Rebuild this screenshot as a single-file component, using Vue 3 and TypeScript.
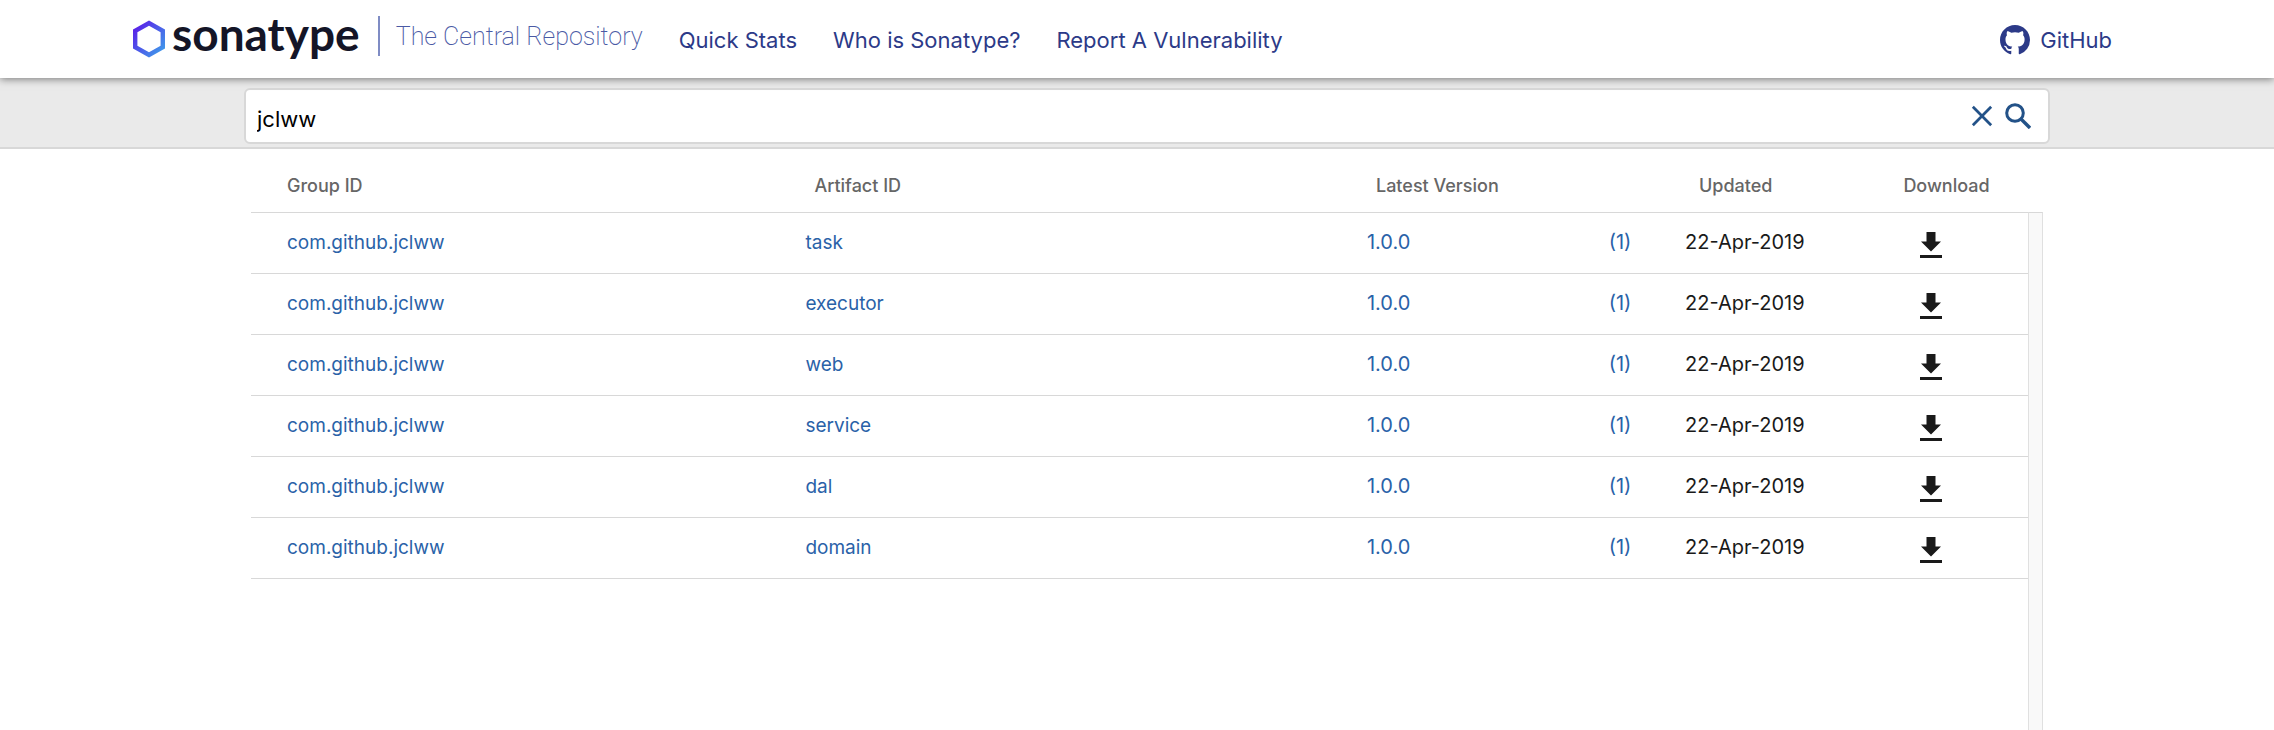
<script setup lang="ts">
import { ref } from 'vue'

interface Artifact {
  group: string
  name: string
  version: string
  count: number
  updated: string
}

const query = ref<string>('jclww')

const artifacts: Artifact[] = ['task', 'executor', 'web', 'service', 'dal', 'domain'].map((name) => ({
  group: 'com.github.jclww',
  name,
  version: '1.0.0',
  count: 1,
  updated: '22-Apr-2019',
}))

const links: string[] = ['Quick Stats', 'Who is Sonatype?', 'Report A Vulnerability']
</script>

<template>
  <div class="page">
    <header class="topbar">
      <a class="brand" href="#">
        <svg class="hexagon" viewBox="0 0 34 38" aria-hidden="true">
          <defs>
            <linearGradient id="hex" x1="0" y1="0" x2="1" y2="1">
              <stop offset="0.1" stop-color="#5a1ee8" />
              <stop offset="0.9" stop-color="#3f9aea" />
            </linearGradient>
          </defs>
          <path
            fill="url(#hex)"
            fill-rule="evenodd"
            d="M17 0.5 33 9.5V28.5L17 37.5 1 28.5V9.5ZM17 5.7 5.4 12.2V25.8L17 32.3 28.6 25.8V12.2Z"
          />
        </svg>
        <span class="wordmark">sonatype</span>
        <span class="tagline">The Central Repository</span>
      </a>
      <nav class="nav">
        <a v-for="link in links" :key="link" href="#">{{ link }}</a>
      </nav>
      <a class="github" href="#">
        <svg viewBox="0 0 16 16" aria-hidden="true">
          <path
            fill="currentColor"
            d="M8 0C3.58 0 0 3.58 0 8c0 3.54 2.29 6.53 5.47 7.59.4.07.55-.17.55-.38 0-.19-.01-.82-.01-1.49-2.01.37-2.53-.49-2.69-.94-.09-.23-.48-.94-.82-1.13-.28-.15-.68-.52-.01-.53.63-.01 1.08.58 1.23.82.72 1.21 1.87.87 2.33.66.07-.52.28-.87.51-1.07-1.78-.2-3.64-.89-3.64-3.95 0-.87.31-1.59.82-2.15-.08-.2-.36-1.02.08-2.12 0 0 .67-.21 2.2.82.64-.18 1.32-.27 2-.27s1.36.09 2 .27c1.53-1.04 2.2-.82 2.2-.82.44 1.1.16 1.92.08 2.12.51.56.82 1.27.82 2.15 0 3.07-1.87 3.75-3.65 3.95.29.25.54.73.54 1.48 0 1.07-.01 1.93-.01 2.2 0 .21.15.46.55.38A8.01 8.01 0 0 0 16 8c0-4.42-3.58-8-8-8Z"
          />
        </svg>
        GitHub
      </a>
    </header>

    <div class="searchband">
      <form class="searchbox" role="search" @submit.prevent>
        <input v-model="query" type="text" aria-label="Search artifacts" />
        <button type="button" aria-label="Clear search" @click="query = ''">
          <svg viewBox="0 0 24 24" aria-hidden="true">
            <path fill="none" stroke="currentColor" stroke-width="3" d="M2 2 22 22M22 2 2 22" />
          </svg>
        </button>
        <button type="submit" aria-label="Search">
          <svg class="lens" viewBox="0 0 26 26" aria-hidden="true">
            <path
              fill="none"
              stroke="currentColor"
              stroke-width="3"
              d="M10 1.7a8.3 8.3 0 1 0 0 16.6 8.3 8.3 0 0 0 0-16.6Z"
            />
            <path fill="none" stroke="currentColor" stroke-width="3.4" d="m16 16 9 9" />
          </svg>
        </button>
      </form>
    </div>

    <main class="results">
      <table>
        <colgroup>
          <col class="c-group" />
          <col class="c-name" />
          <col class="c-version" />
          <col class="c-count" />
          <col class="c-updated" />
          <col class="c-download" />
        </colgroup>
        <thead>
          <tr>
            <th scope="col" class="group">Group ID</th>
            <th scope="col">Artifact ID</th>
            <th scope="col" colspan="2">Latest Version</th>
            <th scope="col" class="updated">Updated</th>
            <th scope="col" class="updated">Download</th>
          </tr>
        </thead>
        <tbody>
          <tr v-for="item in artifacts" :key="item.name">
            <td class="group"><a href="#">{{ item.group }}</a></td>
            <td class="name"><a href="#">{{ item.name }}</a></td>
            <td><a href="#">{{ item.version }}</a></td>
            <td><a href="#">({{ item.count }})</a></td>
            <td>{{ item.updated }}</td>
            <td class="download">
              <button type="button" :aria-label="`Download ${item.name}`">
                <svg viewBox="0 0 22 26" aria-hidden="true">
                  <path fill="currentColor" d="M6.5 0h9v9.5H21L11 19.5 1 9.5h5.5ZM0 23h22v3H0Z" />
                </svg>
              </button>
            </td>
          </tr>
        </tbody>
      </table>
      <div class="rail"></div>
    </main>
  </div>
</template>

<style>
body {
  margin: 0;
  background: #fff;
}
</style>

<style scoped>
.page {
  display: flex;
  flex-direction: column;
  min-height: 100vh;
  font-family: Inter, "Liberation Sans", sans-serif;
  font-size: 20px;
  color: #1a1a1a;
}

a {
  color: #2a62a8;
  text-decoration: none;
}

button {
  display: flex;
  padding: 0;
  border: 0;
  background: none;
  color: inherit;
  cursor: pointer;
}

.topbar {
  position: relative;
  display: flex;
  align-items: center;
  height: 78px;
  padding: 0 162px 0 132px;
  background: #fff;
  box-shadow: 0 1px 8px rgba(0, 0, 0, 0.5);
}

.brand {
  display: flex;
  align-items: center;
  height: 78px;
}

.hexagon {
  width: 34px;
  height: 38px;
}

.wordmark {
  margin-left: 6px;
  padding-bottom: 10px;
  font-family: Lato, sans-serif;
  font-size: 46px;
  line-height: 48px;
  font-weight: 700;
  color: #141527;
}

.tagline {
  margin-left: 18px;
  padding: 2px 0 0 16px;
  margin-bottom: 6px;
  border-left: 2px solid #7f8cc4;
  font-family: Roboto, sans-serif;
  font-size: 25px;
  line-height: 38px;
  font-weight: 200;
  color: #4a5aa5;
}

.nav {
  display: flex;
  gap: 36px;
  margin-left: 36px;
}

.nav a,
.github {
  padding-top: 2px;
  font-size: 22px;
  line-height: 32px;
  color: #2c3a88;
}

.github {
  display: flex;
  align-items: center;
  gap: 10px;
  margin-left: auto;
}

.github svg {
  width: 30px;
  height: 30px;
}

.searchband {
  padding: 10px 224px 3px 244px;
  border-bottom: 2px solid #d8d8d8;
  background: #eaeaea;
}

.searchbox {
  display: flex;
  align-items: center;
  gap: 12px;
  height: 52px;
  padding: 0 17px 0 11px;
  border: 2px solid #d8d8d8;
  border-radius: 6px;
  background: #fff;
  color: #235288;
}

.searchbox input {
  flex: 1;
  min-width: 0;
  padding: 6px 0 0;
  border: 0;
  outline: 0;
  background: none;
  font: 22px/32px Inter, "Liberation Sans", sans-serif;
  color: #000;
}

.searchbox svg {
  width: 22px;
  height: 22px;
}

.searchbox .lens {
  width: 26px;
  height: 26px;
}

.results {
  flex: 1;
  display: grid;
  grid-template-columns: 1fr 15px;
  align-items: start;
  padding: 0 231px 0 251px;
}

table {
  width: 100%;
  table-layout: fixed;
  border-spacing: 0;
}

.c-group { width: 31.2%; }
.c-name { width: 31.6%; }
.c-version { width: 13.6%; }
.c-count { width: 4.3%; }
.c-updated { width: 11.5%; }
.c-download { width: 7.8%; }

th {
  height: 64px;
  padding: 10px 0 0 9px;
  box-sizing: border-box;
  border-bottom: 1px solid #d8d8d8;
  text-align: left;
  font-size: 18px;
  font-weight: 500;
  color: #666;
}

th.updated {
  padding-left: 14px;
}

td {
  height: 61px;
  padding: 0 0 2px;
  box-sizing: border-box;
  border-bottom: 1px solid #d8d8d8;
}

th.group,
td.group {
  padding-left: 36px;
}

td.group,
td.name {
  font-size: 19px;
}

.download {
  padding: 3px 0 0 31px;
}

.download svg {
  width: 22px;
  height: 26px;
}

.rail {
  align-self: stretch;
  margin-top: 63px;
  box-sizing: border-box;
  border: 1px solid #e0e0e0;
  border-top-color: #d8d8d8;
  border-bottom: 0;
  background: #f9f9f9;
}
</style>
